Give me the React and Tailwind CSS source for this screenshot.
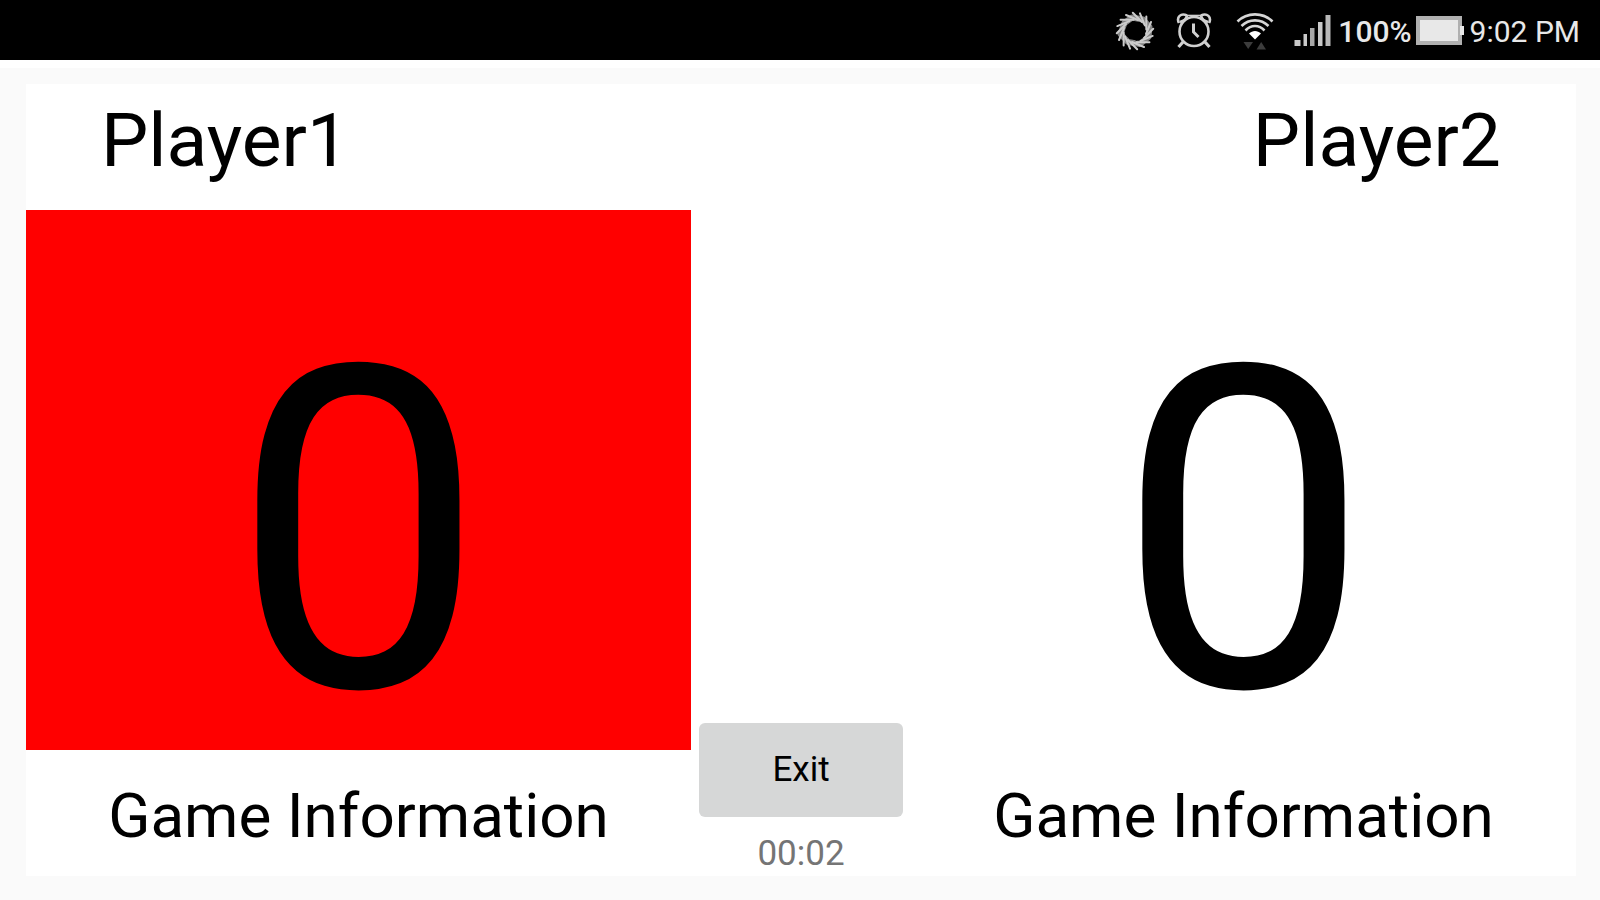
const STROKES = Array.from({ length: 16 }, (_, i) => i * 22.5);

function SyncRingIcon() {
  return (
    <svg className="h-10 w-[42px]" viewBox="0 0 42 40" fill="none" aria-hidden="true">
      <path
        d="M10.5 12 L18 6.5 L29 8.5 L35.5 16 L34.5 26 L26 33 L14 31 L6.5 23 Z"
        stroke="#858585"
        strokeWidth="6"
        strokeLinejoin="round"
      />
      {STROKES.map((angle) => (
        <path
          key={angle}
          d="M12 4 L24 9"
          stroke="#cccccc"
          strokeWidth="2"
          strokeLinecap="round"
          transform={`rotate(${angle} 21 20)`}
        />
      ))}
      <path d="M11.5 19 L19 10 L31 16 L30 21 L23 30 L12.5 25 Z" fill="#000000" />
    </svg>
  );
}

function AlarmIcon() {
  return (
    <svg className="h-10 w-9" viewBox="0 0 36 40" fill="none" stroke="#d0d0d0" strokeWidth="2.6" aria-hidden="true">
      <circle cx="18" cy="20.5" r="14.5" />
      <path d="M3 12 C0 6 5 1.5 11 4.5 M33 12 C36 6 31 1.5 25 4.5" />
      <path d="M4 11 C8 10 10.5 8 11 4.5 M32 11 C28 10 25.5 8 25 4.5" />
      <path d="M11 4.5 H25" strokeWidth="1.6" />
      <path d="M7 31 L2.5 36 M29 31 L33.5 36" strokeWidth="3.2" />
      <path d="M17.5 12.5 V21 L22.5 26" strokeWidth="3" />
    </svg>
  );
}

function WifiIcon() {
  return (
    <svg className="ml-1 h-10 w-[38px]" viewBox="0 0 38 40" fill="none" aria-hidden="true">
      <g stroke="#d6d6d6" strokeWidth="2.6">
        <path d="M1.5 10.5 C11 1 27 1 36.5 10.5" />
        <path d="M5.5 15 C13 7.5 25 7.5 32.5 15" />
        <path d="M9.5 19.5 C15 13.5 23 13.5 28.5 19.5" />
      </g>
      <path d="M13 22.5 C16.5 19 21.5 19 25 22.5 L19 28.5 Z" fill="#ffffff" />
      <path d="M7.5 31 H17 L12.2 38 Z" fill="#3c3c3c" />
      <path d="M20.5 38.5 H30 L25.2 31 Z" fill="#3c3c3c" />
    </svg>
  );
}

function SignalIcon() {
  return (
    <svg className="h-10 w-[38px]" viewBox="0 0 38 40" fill="#c9c9c9" aria-hidden="true">
      <rect x="0.5" y="29" width="6" height="6" />
      <rect x="9.5" y="23" width="3.5" height="12" />
      <rect x="16" y="17" width="4.5" height="18" fill="#a8a8a8" />
      <rect x="24" y="11" width="4.5" height="24" />
      <rect x="31.5" y="4" width="5" height="31" fill="#b8b8b8" />
    </svg>
  );
}

function BatteryIcon() {
  return (
    <svg className="h-10 w-12" viewBox="0 0 48 40" aria-hidden="true">
      <rect x="0" y="5" width="46" height="29" fill="#b0b0b0" />
      <rect x="4" y="9" width="38" height="21" fill="#e8e8e8" />
      <rect x="44" y="15" width="4" height="9" fill="#e8e8e8" />
    </svg>
  );
}

function StatusBar() {
  return (
    <header className="flex h-[60px] items-center justify-end bg-black pt-0.5 pr-5 text-[30px] leading-10 text-[#e8e8e8]">
      <div className="flex items-center gap-5">
        <SyncRingIcon />
        <AlarmIcon />
        <WifiIcon />
        <SignalIcon />
      </div>
      <span className="ml-1.5 pt-0.5 font-medium">100%</span>
      <div className="ml-1 mr-1.5">
        <BatteryIcon />
      </div>
      <time className="pt-0.5">9:02 PM</time>
    </header>
  );
}

function PlayerPanel({ name, score, active, alignRight }) {
  return (
    <section className="flex min-w-0 flex-1 flex-col text-black">
      <h2
        className={`px-[75px] pt-3 pb-[26px] text-[75px] leading-[88px] ${alignRight ? "text-right" : "text-left"}`}
      >
        {name}
      </h2>
      <div
        className={`flex flex-1 items-center justify-center pt-[106px] text-[450px] leading-[360px] ${active ? "bg-[#ff0000]" : ""}`}
      >
        <span>{score}</span>
      </div>
      <p className="pt-[29px] pb-[23px] text-center text-[62px] leading-[74px]">Game Information</p>
    </section>
  );
}

export default function App() {
  return (
    <div className="flex min-h-screen flex-col bg-[#fafafa] font-['Roboto',sans-serif]">
      <StatusBar />
      <div className="h-2 bg-white" />
      <main className="mt-4 mr-6 mb-6 ml-[26px] flex flex-1 bg-white">
        <PlayerPanel name="Player1" score={0} active />
        <div className="flex w-[220px] shrink-0 flex-col justify-end px-2">
          <button
            type="button"
            className="h-[94px] rounded-md bg-[#d6d7d7] text-[35px] leading-10 text-black"
          >
            Exit
          </button>
          <time className="mt-[17px] mb-0.5 text-center text-[35px] leading-10 text-[#757575]">00:02</time>
        </div>
        <PlayerPanel name="Player2" score={0} alignRight />
      </main>
    </div>
  );
}
